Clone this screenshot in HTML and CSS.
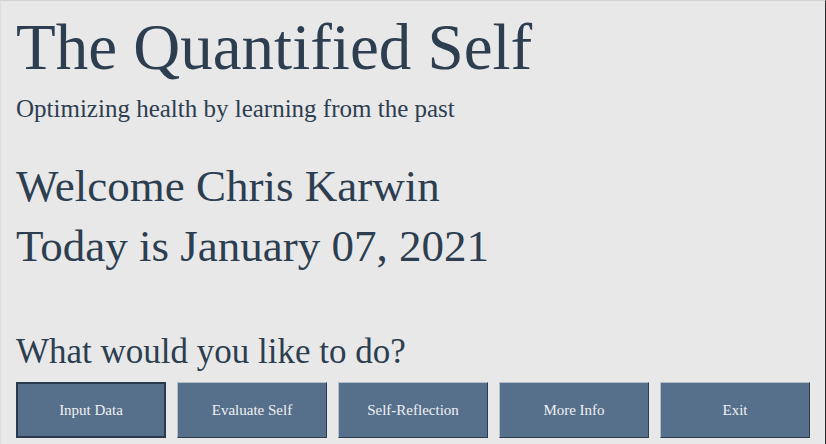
FILE: index.html
```html
<!DOCTYPE html>
<html>
<head>
<meta charset="utf-8">
<link rel="stylesheet" href="styles.css">
</head>
<body>
<div class="window">
  <h1 class="title">The Quantified Self</h1>
  <p class="subtitle">Optimizing health by learning from the past</p>
  <div class="greeting">
    <div class="line">Welcome Chris Karwin</div>
    <div class="line">Today is January 07, 2021</div>
  </div>
  <div class="prompt">What would you like to do?</div>
  <div class="actions">
    <button class="btn btn-focus">Input Data</button>
    <button class="btn">Evaluate Self</button>
    <button class="btn">Self-Reflection</button>
    <button class="btn">More Info</button>
    <button class="btn">Exit</button>
  </div>
</div>
</body>
</html>
```
FILE: styles.css
```css
html, body {
  margin: 0;
  padding: 0;
  background: #e8e8e8;
}
.window {
  box-sizing: border-box;
  width: 826px;
  height: 444px;
  background: #e8e8e8;
  border-top: 1px solid #d2d2d2;
  border-right: 1px solid #2a2a30;
  border-left: 1px solid #dedede;
  padding: 10px 0 0 15px;
  font-family: "Liberation Serif", "Times New Roman", serif;
  color: #2c3e50;
}
.title {
  margin: 0;
  font-weight: normal;
  font-size: 65px;
  line-height: 72px;
}
.subtitle {
  margin: 11px 0 0 0;
  font-size: 25px;
  line-height: 30px;
}
.greeting {
  margin-top: 32px;
}
.line {
  font-size: 45px;
  line-height: 60px;
}
.prompt {
  margin-top: 56px;
  font-size: 35px;
  line-height: 40px;
}
.actions {
  margin-top: 10px;
  display: grid;
  grid-template-columns: repeat(5, 150px);
  column-gap: 11px;
}
.btn {
  box-sizing: border-box;
  height: 56px;
  margin: 0;
  background: #566f8a;
  color: #eef1f4;
  font-family: "Liberation Serif", "Times New Roman", serif;
  font-size: 15px;
  border-style: solid;
  border-width: 1px;
  border-color: #b4bfcb #2e3d4e #2e3d4e #b4bfcb;
  padding: 0;
}
.btn-focus {
  border: 2px solid #2a3a4c;
}
```
